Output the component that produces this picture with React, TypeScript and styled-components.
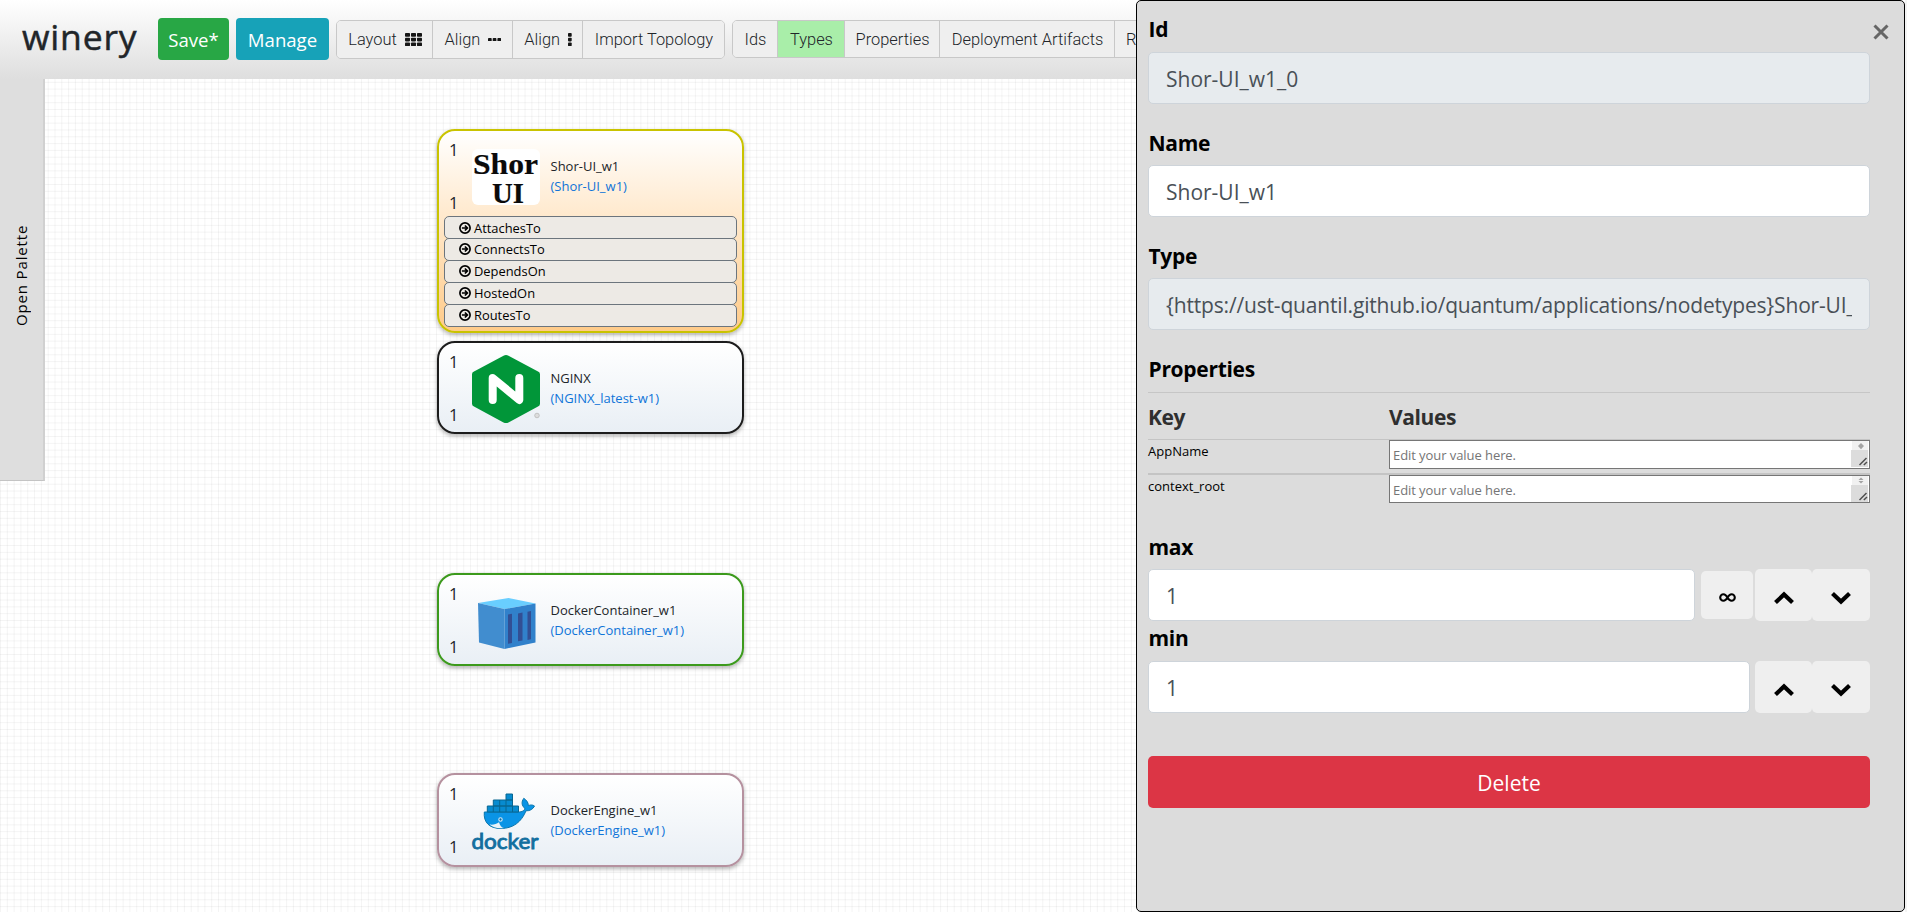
import React from "react";
import styled, { createGlobalStyle } from "styled-components";

const GlobalStyle = createGlobalStyle`
  * { box-sizing: border-box; }
  html, body { margin: 0; padding: 0; height: 912px; overflow: hidden; background: #fff; }
  body { font-family: "Open Sans", "Noto Sans", sans-serif; color: #212529; }
  button { font-family: inherit; margin: 0; padding: 0; border: 0; }
`;

const Page = styled.div`
  position: relative;
  display: flex;
  flex-direction: column;
  width: 1907px;
  height: 912px;
  overflow: hidden;
`;

const Header = styled.header`
  display: flex;
  flex: none;
  align-items: flex-start;
  height: 79px;
  padding-left: 22px;
  background: linear-gradient(#ffffff, #dedede);
`;

const Brand = styled.div`
  width: 136px;
  margin-top: 12px;
  font-size: 35.5px;
  font-weight: 500;
  line-height: 48px;
  letter-spacing: 0.8px;
  -webkit-text-stroke: 0.5px #212529;
`;

const MainButton = styled.button<{ $width: number; $color: string }>`
  width: ${(p) => p.$width}px;
  height: 42px;
  margin: 18px 7px 0 0;
  border-radius: 4px;
  background: ${(p) => p.$color};
  color: #fff;
  font-size: 18.600px;
  line-height: 42px;
  padding-top: 1px;
`;

const ButtonGroup = styled.div<{ $height: number; $gap: number }>`
  display: flex;
  flex: none;
  height: ${(p) => p.$height}px;
  margin: 20px ${(p) => p.$gap}px 0 0;
  border: 1px solid #c8c8c8;
  border-radius: 5px;
  overflow: hidden;
`;

const ToolButton = styled.button<{ $width: number; $active?: boolean; $start?: boolean }>`
  display: flex;
  flex: none;
  align-items: center;
  justify-content: ${(p) => (p.$start ? "flex-start" : "center")};
  gap: 8px;
  width: ${(p) => p.$width}px;
  padding-left: ${(p) => (p.$start ? 11 : 1)}px;
  background: ${(p) => (p.$active ? "#a9eea9" : "#efefef")};
  color: #212529;
  font-family: Roboto, sans-serif;
  font-weight: 300;
  font-size: 16.4px;
  white-space: nowrap;
  & + & { border-left: 1px solid #c8c8c8; }
`;

const Workspace = styled.main`
  display: flex;
  flex: 1;
  align-items: flex-start;
  background-color: #fff;
  background-image:
    linear-gradient(to right, rgba(0, 0, 0, 0.045) 1px, transparent 1px),
    linear-gradient(to bottom, rgba(0, 0, 0, 0.045) 1px, transparent 1px);
  background-size: 6.82px 6.82px;
  background-position: 0 2.8px;
`;

const Palette = styled.aside`
  display: flex;
  flex: none;
  justify-content: center;
  width: 45px;
  height: 402px;
  padding-top: 147px;
  background: #dedede;
  border-right: 2px solid #d0d0d0;
  border-bottom: 1px solid #c4c4c4;
`;

const PaletteLabel = styled.div`
  height: 100px;
  writing-mode: vertical-rl;
  transform: rotate(180deg);
  color: #000;
  font-size: 15px;
  line-height: 43px;
  white-space: nowrap;
  letter-spacing: 0.85px;
`;

const Canvas = styled.div`
  position: relative;
  flex: 1;
  height: 833px;
`;

const NodeCard = styled.article<{ $top: number; $height: number; $border: string; $end: string }>`
  position: absolute;
  left: 392px;
  top: ${(p) => p.$top}px;
  width: 307px;
  height: ${(p) => p.$height}px;
  border: 2px solid ${(p) => p.$border};
  border-radius: 18px;
  background: linear-gradient(#ffffff, ${(p) => p.$end});
  box-shadow: 0 2px 4px rgba(0, 0, 0, 0.3);
`;

const NodeHead = styled.div`
  display: flex;
  height: 89px;
`;

const Counts = styled.div<{ $last: number }>`
  width: 33px;
  padding: 7.500px 0 0 10px;
  font-size: 16.5px;
  line-height: 22px;
  color: #212529;
  div + div { margin-top: ${(p) => p.$last}px; }
`;

const Logo = styled.svg<{ $top: number }>`
  flex: none;
  width: 68px;
  height: 68px;
  margin-top: ${(p) => p.$top}px;
  overflow: visible;
`;

const NodeText = styled.div<{ $top: number }>`
  padding: ${(p) => p.$top}px 0 0 10.5px;
  font-size: 13px;
  line-height: 20.6px;
  white-space: nowrap;
  color: #212529;
`;

const NodeType = styled.div`
  color: #0f74d8;
`;

const Relations = styled.div`
  display: flex;
  flex-direction: column;
  margin: -4px 5px 0;
`;

const Relation = styled.div`
  display: flex;
  align-items: center;
  height: 23px;
  margin-bottom: -1.1px;
  padding-left: 13.5px;
  gap: 3.5px;
  border: 1px solid #6c757d;
  border-radius: 5px;
  background: #edeae5;
  color: #000;
  font-size: 12.900px;
  line-height: 20px;
`;

const Panel = styled.section`
  position: absolute;
  top: 0;
  right: 2px;
  width: 769px;
  height: 912px;
  padding: 12px 34px 0 11px;
  border: 1px solid #000;
  border-radius: 5px;
  background: #dcdcdc;
`;

const Edge = styled.div`
  position: absolute;
  top: 0;
  right: 0;
  width: 2px;
  height: 912px;
  background: #f3f3f3;
`;

const CloseButton = styled.button`
  position: absolute;
  top: 22.500px;
  right: 15px;
  width: 16px;
  height: 16px;
  background: none;
  svg { display: block; }
`;

const Label = styled.h2<{ $gap?: number }>`
  margin: 0 0 ${(p) => p.$gap ?? 6}px 0.5px;
  color: #000;
  font-size: 21px;
  font-weight: 700;
  line-height: 32px;
  letter-spacing: -0.3px;
`;

const Field = styled.div`
  margin-bottom: 23px;
`;

const Input = styled.div<{ $disabled?: boolean; $spacing?: number }>`
  flex: 1;
  height: 52px;
  padding: 0 17px;
  border: 1px solid #ced4da;
  border-radius: 5px;
  background: ${(p) => (p.$disabled ? "#e7ebee" : "#fff")};
  color: #495057;
  font-size: 21px;
  line-height: 53px;
  letter-spacing: ${(p) => p.$spacing ?? 0}px;
`;

const Clip = styled.div`
  overflow: hidden;
  height: 50px;
  white-space: nowrap;
`;

const PropsHead = styled.div`
  display: grid;
  grid-template-columns: 241px 1fr;
  height: 47px;
  border-top: 1px solid #c6c6c6;
  color: #2f2f2f;
  font-size: 21px;
  font-weight: 700;
  line-height: 48px;
  letter-spacing: -0.4px;
`;

const PropsRow = styled.div<{ $line: number; $height: number }>`
  display: grid;
  grid-template-columns: 241px 1fr;
  align-items: start;
  height: ${(p) => p.$height}px;
  border-top: ${(p) => p.$line}px solid #c4c4c4;
  color: #000;
  font-size: 13px;
  line-height: 22px;
`;

const TextArea = styled.div<{ $height: number }>`
  display: flex;
  justify-content: space-between;
  height: ${(p) => p.$height}px;
  padding: 0 1px 0 3px;
  border: 1px solid #767676;
  background: #fff;
  color: #757575;
  font-size: 13px;
  line-height: 28px;
  letter-spacing: -0.07px;
`;

const NumberRow = styled.div`
  display: flex;
  align-items: center;
  height: 52px;
`;

const StepButton = styled.button<{ $width: number; $height: number; $left: number }>`
  display: flex;
  align-items: center;
  justify-content: center;
  width: ${(p) => p.$width}px;
  height: ${(p) => p.$height}px;
  margin-left: ${(p) => p.$left}px;
  padding-top: 5px;
  border-radius: 5px;
  background: #efefef;
`;

const DeleteButton = styled.button`
  display: block;
  width: 100%;
  height: 52px;
  margin-top: 43px;
  border-radius: 5px;
  background: #dc3545;
  color: #fff;
  font-size: 21px;
  line-height: 54px;
`;

const Spacer = styled.div<{ $height: number }>`
  height: ${(p) => p.$height}px;
`;

function Squares({ cols, rows, cell, gap }: { cols: number; rows: number; cell: [number, number]; gap: number }) {
  const [w, h] = cell;
  const items: React.ReactNode[] = [];
  for (let r = 0; r < rows; r++)
    for (let c = 0; c < cols; c++)
      items.push(<rect key={`${r}-${c}`} x={c * (w + gap)} y={r * (h + gap)} width={w} height={h} rx="0.8" />);
  return (
    <svg width={cols * (w + gap) - gap} height={rows * (h + gap) - gap} fill="#161616">
      {items}
    </svg>
  );
}

const ArrowCircle = () => (
  <svg width="12" height="12" viewBox="0 0 12 12" fill="none" stroke="#000" strokeWidth="1.7">
    <circle cx="6" cy="6" r="5.1" />
    <path d="M2.9 6H8M5.9 3.5 8.4 6 5.9 8.5" />
  </svg>
);

const Chevron = ({ down }: { down?: boolean }) => (
  <svg width="20" height="14" viewBox="0 0 20 14" fill="none" stroke="#000" strokeWidth="4.2">
    <path d={down ? "M1.5 2.5 10 10.5 18.5 2.5" : "M1.5 11.5 10 3.5 18.5 11.5"} />
  </svg>
);

const InfinityIcon = () => (
  <svg width="17" height="9" viewBox="0 0 17 9" fill="none" stroke="#000" strokeWidth="2.1">
    <path d="M8.5 4.500C7.200 2.200 6 1.200 4.500 1.200a3.300 3.300 0 0 0 0 6.600C6 7.800 7.200 6.800 8.500 4.500S11 1.200 12.500 1.200a3.300 3.300 0 0 1 0 6.600C11 7.800 9.800 6.800 8.500 4.500Z" />
  </svg>
);

const ScrollCorner = ({ split }: { split?: boolean }) => (
  <svg width="17" height="26" viewBox="0 0 17 26">
    <rect x="1" width="16" height="9" fill="#f1f1f1" />
    {split ? (
      <path d="M7.5 4 10 1.6 12.5 4zM7.5 5 10 7.4 12.5 5z" fill="#a3a3a3" />
    ) : (
      <path d="M7 5 10 2 13 5 10 8.2z" fill="#a3a3a3" />
    )}
    <rect y="9" width="17" height="17" fill="#dcdcdc" />
    <path d="M8.5 24 15.5 17M12.8 24 16 21" stroke="#505050" strokeWidth="1.5" />
  </svg>
);

const ShorLogo = () => (
  <Logo viewBox="0 0 68 68" $top={12}>
    <rect x="0" y="6" width="68" height="56" rx="6" fill="#fff" />
    <g fill="#0a0a0a" stroke="#0a0a0a" strokeWidth="0.2" fontFamily='"Liberation Serif", serif' fontWeight="700" fontSize="29.5">
      <text x="1" y="31" textLength="65" lengthAdjust="spacingAndGlyphs">Shor</text>
      <text x="20" y="60" textLength="32" lengthAdjust="spacingAndGlyphs">UI</text>
    </g>
  </Logo>
);

const NginxLogo = () => (
  <Logo viewBox="0 0 68 68" $top={12}>
    <path d="M31.5.8a5 5 0 0 1 5 0L66 16.6a3 3 0 0 1 2 3v29a3 3 0 0 1-2 3L36.5 67.4a5 5 0 0 1-5 0L2 51.600a3 3 0 0 1-2-3v-29a3 3 0 0 1 2-3z" fill="#019639" />
    <path d="M20.7 45V23L47.3 45V23" fill="none" stroke="#fff" strokeWidth="8" strokeLinecap="round" strokeLinejoin="round" />
    <circle cx="65" cy="60.5" r="2.3" fill="#ddd" stroke="#b9b9b9" strokeWidth="0.8" />
  </Logo>
);

const ContainerLogo = () => (
  <Logo viewBox="0 0 68 68" $top={11}>
    <path d="M6 17 36.5 12 63.5 17.5 32.5 23z" fill="#69ceff" />
    <path d="M6 17 32.5 23V63L7 56.5z" fill="#418dcf" />
    <path d="M32.5 23 63.5 17.5V56.5L32.5 63z" fill="#3181cb" />
    <path d="M36 28.500 40 27.800V57L36 57.800zM46 27.500 50.500 26.600V54.500L46 55.300zM55.500 25.800 59 25V53.300L55.500 54z" fill="#324f94" />
  </Logo>
);

const DockerLogo = () => (
  <Logo viewBox="0 0 68 68" $top={12}>
    <g transform="translate(0 1)">
      <path d="M12.300 24H46.500c3.500.1 6.500-1.600 6.200-3.800-3-2.600-3.600-6.200-.9-9.900 3.200 2.300 4.600 4.400 4.500 7.300 2.400-1 4.500-.8 6.200.4-1.500 3.200-4.500 5-8.500 4.800C49.500 34 41 40.500 29 40.500 17.500 40.500 11.300 34.500 12.300 24Z" fill="#0a94e6" stroke="#0b76ac" strokeWidth="1" />
      <path d="M15.300 18H46.500V24H15.300zM21.300 12H40.500V18H21.300zM34 6H40.500V12H34z" fill="#078bd0" stroke="#086691" strokeWidth="1" />
      <path d="M21.300 18V24M27.700 12V24M34 12V24M40.500 18V24" stroke="#086691" strokeWidth="1" />
      <path d="M17.500 36.500C21 37 24.500 36.200 27 34.200 28 37.500 29.500 39.500 32 40 26 40.700 20.500 39.500 17.500 36.500Z" fill="#eaf3f8" />
      <circle cx="28.500" cy="31.500" r="1.700" fill="#0a6ea5" stroke="#d4e8f4" strokeWidth="1.100" />
    </g>
    <text x="-0.5" y="62" textLength="67" lengthAdjust="spacingAndGlyphs" fontFamily="Lato, sans-serif" fontWeight="400" fontSize="22" fill="#126f9f" stroke="#126f9f" strokeWidth="0.9">docker</text>
  </Logo>
);

interface NodeProps {
  name: string;
  type: string;
  top: number;
  height: number;
  border: string;
  end?: string;
  logo: React.ReactNode;
  relations?: string[];
}

function TopologyNode({ name, type, top, height, border, end = "#e9eff5", logo, relations }: NodeProps) {
  return (
    <NodeCard $top={top} $height={height} $border={border} $end={end}>
      <NodeHead>
        <Counts $last={31}>
          <div>1</div>
          <div>1</div>
        </Counts>
        {logo}
        <NodeText $top={24.7}>
          {name}
          <NodeType>({type})</NodeType>
        </NodeText>
      </NodeHead>
      {relations && (
        <Relations>
          {relations.map((r) => (
            <Relation key={r}>
              <ArrowCircle />
              {r}
            </Relation>
          ))}
        </Relations>
      )}
    </NodeCard>
  );
}

export default function App() {
  return (
    <Page>
      <GlobalStyle />
      <Header>
        <Brand>winery</Brand>
        <MainButton $width={71} $color="#28a745">Save*</MainButton>
        <MainButton $width={93} $color="#17a2b8">Manage</MainButton>
        <ButtonGroup $height={39} $gap={7}>
          <ToolButton $width={95}>Layout <Squares cols={3} rows={3} cell={[5, 3.7]} gap={1} /></ToolButton>
          <ToolButton $width={80}>Align <Squares cols={3} rows={1} cell={[3.7, 3.7]} gap={1} /></ToolButton>
          <ToolButton $width={70}>Align <Squares cols={1} rows={3} cell={[3.7, 3.7]} gap={1} /></ToolButton>
          <ToolButton $width={142}>Import Topology</ToolButton>
        </ButtonGroup>
        <ButtonGroup $height={38} $gap={0}>
          <ToolButton $width={44}>Ids</ToolButton>
          <ToolButton $width={67} $active>Types</ToolButton>
          <ToolButton $width={95}>Properties</ToolButton>
          <ToolButton $width={175}>Deployment Artifacts</ToolButton>
          <ToolButton $width={60} $start>R</ToolButton>
        </ButtonGroup>
      </Header>
      <Workspace>
        <Palette>
          <PaletteLabel>Open Palette</PaletteLabel>
        </Palette>
        <Canvas>
          <TopologyNode
            name="Shor-UI_w1" type="Shor-UI_w1" top={50} height={204} border="#c9c300" end="#ffcb89"
            logo={<ShorLogo />}
            relations={["AttachesTo", "ConnectsTo", "DependsOn", "HostedOn", "RoutesTo"]}
          />
          <TopologyNode name="NGINX" type="NGINX_latest-w1" top={262} height={93} border="#1c1c1c" logo={<NginxLogo />} />
          <TopologyNode name="DockerContainer_w1" type="DockerContainer_w1" top={494} height={93} border="#3c9a1c" logo={<ContainerLogo />} />
          <TopologyNode name="DockerEngine_w1" type="DockerEngine_w1" top={694} height={94} border="#b5919f" logo={<DockerLogo />} />
        </Canvas>
      </Workspace>
      <Edge />
      <Panel>
        <CloseButton aria-label="Close">
          <svg width="16" height="16" viewBox="0 0 16 16" stroke="#666" strokeWidth="3"><path d="M1.5 1.5 14.5 14.5M14.5 1.5 1.5 14.5" /></svg>
        </CloseButton>
        <Field>
          <Label $gap={7}>Id</Label>
          <Input $disabled>Shor-UI_w1_0</Input>
        </Field>
        <Field>
          <Label>Name</Label>
          <Input>Shor-UI_w1</Input>
        </Field>
        <Field>
          <Label>Type</Label>
          <Input $disabled $spacing={-0.17}>
            <Clip>{"{https://ust-quantil.github.io/quantum/applications/nodetypes}Shor-UI_"}</Clip>
          </Input>
        </Field>
        <Label $gap={7}>Properties</Label>
        <PropsHead>
          <div>Key</div>
          <div>Values</div>
        </PropsHead>
        <PropsRow $line={1} $height={34}>
          <div>AppName</div>
          <TextArea $height={29}>Edit your value here.<ScrollCorner /></TextArea>
        </PropsRow>
        <PropsRow $line={2} $height={30}>
          <div>context_root</div>
          <TextArea $height={28}>Edit your value here.<ScrollCorner split /></TextArea>
        </PropsRow>
        <Spacer $height={28} />
        <Label>max</Label>
        <NumberRow>
          <Input>1</Input>
          <StepButton $width={52} $height={48} $left={6}><InfinityIcon /></StepButton>
          <StepButton $width={57} $height={52} $left={2}><Chevron /></StepButton>
          <StepButton $width={58} $height={52} $left={0}><Chevron down /></StepButton>
        </NumberRow>
        <Spacer $height={1} />
        <Label $gap={7}>min</Label>
        <NumberRow>
          <Input>1</Input>
          <StepButton $width={57} $height={52} $left={5}><Chevron /></StepButton>
          <StepButton $width={58} $height={52} $left={0}><Chevron down /></StepButton>
        </NumberRow>
        <DeleteButton>Delete</DeleteButton>
      </Panel>
    </Page>
  );
}
